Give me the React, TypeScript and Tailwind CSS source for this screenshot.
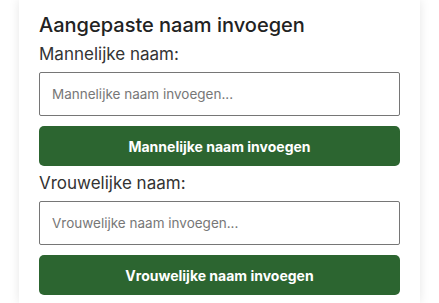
export default function App() {
  return (
    <div className="h-[303px] overflow-hidden bg-white px-[19px] font-['Inter',sans-serif]">
      <div className="h-full bg-white px-5 pt-[11px] shadow-[0_0_10px_rgba(0,0,0,0.1)]">
        <h2 className="text-[20px] leading-7 font-medium text-[#222]">Aangepaste naam invoegen</h2>
        <NameField label="Mannelijke naam:" placeholder="Mannelijke naam invoegen..." button="Mannelijke naam invoegen" />
        <NameField label="Vrouwelijke naam:" placeholder="Vrouwelijke naam invoegen..." button="Vrouwelijke naam invoegen" />
      </div>
    </div>
  );
}

function NameField({ label, placeholder, button }: { label: string; placeholder: string; button: string }) {
  return (
    <div className="mb-[2px] flex flex-col">
      <label className="mt-[3px] text-[17px] leading-6 text-[#333]">{label}</label>
      <input
        className="mt-[6px] h-[44px] w-full rounded-[2px] border border-[#767676] px-3 text-[13.5px] text-[#333] placeholder:text-[#777] outline-none"
        placeholder={placeholder}
      />
      <button className="mt-[10px] h-[40px] w-full rounded-[5px] bg-[#2c6530] text-[14px] font-bold text-white">
        {button}
      </button>
    </div>
  );
}
